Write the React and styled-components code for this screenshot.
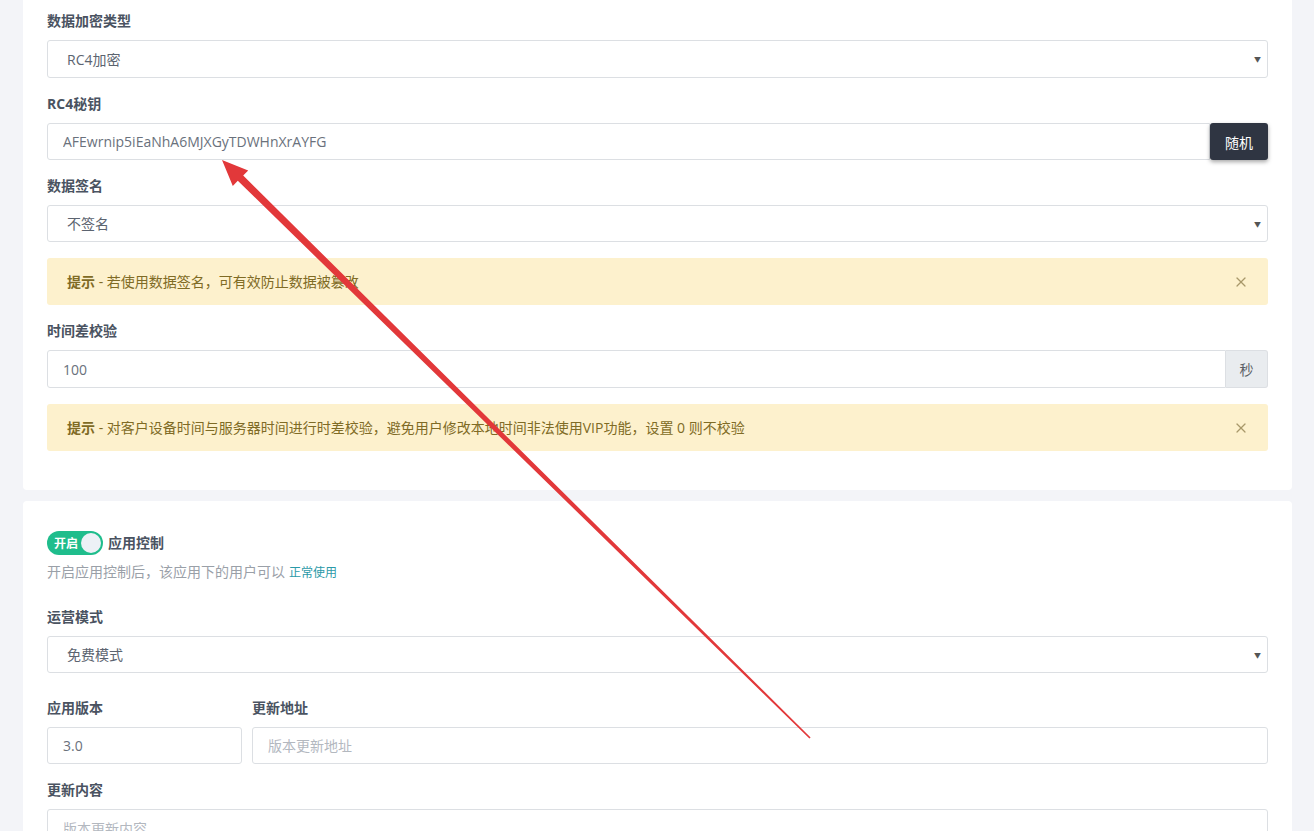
import React from 'react';
import styled, { createGlobalStyle } from 'styled-components';
import { X } from 'lucide-react';

const GlobalStyle = createGlobalStyle`
	html, body {
		margin: 0;
		padding: 0;
		background: #f3f4f8;
		overflow: hidden;
	}
	body {
		font-family: "Open Sans", "Noto Sans CJK SC", sans-serif;
		font-size: 14px;
		color: #4a5260;
	}
	* {
		box-sizing: border-box;
	}
`;

const Page = styled.div`
	position: relative;
	width: 1314px;
	height: 831px;
	padding: 0 22px 0 23px;
	overflow: hidden;
`;

const Card = styled.div`
	background: #fff;
	padding: ${props => props.first ? '11px 24px 39px' : '30px 24px 40px'};
	margin-bottom: 11px;
	border-radius: ${props => props.first ? '0 0 4px 4px' : '4px'};
`;

const Group = styled.div`
	margin-bottom: ${props => props.gap || 16}px;
`;

const Label = styled.label`
	display: block;
	font-weight: 700;
	font-size: 14px;
	line-height: 20px;
	color: #4a5361;
	margin-bottom: 9px;
`;

const SelectWrap = styled.div`
	position: relative;
`;

const Select = styled.select`
	appearance: none;
	-webkit-appearance: none;
	display: block;
	width: 100%;
	height: ${props => props.h || 38}px;
	padding: 0 30px 0 19px;
	border: 1px solid #dcdfe3;
	border-radius: 3px;
	background: #fff;
	font-family: inherit;
	font-size: 14px;
	color: #5c6470;
	outline: none;
`;

const Caret = styled.span`
	position: absolute;
	right: 7px;
	top: 50%;
	transform: translateY(-50%);
	font-size: 7px;
	line-height: 1;
	color: #555;
	pointer-events: none;
`;

const InputGroup = styled.div`
	display: flex;
	align-items: stretch;
	height: ${props => props.h || 37}px;
`;

const Input = styled.input`
	flex: 1;
	min-width: 0;
	display: block;
	width: 100%;
	height: ${props => props.h ? props.h + 'px' : '100%'};
	padding: 0 15px;
	border: 1px solid #dcdfe3;
	border-radius: ${props => props.joined ? '3px 0 0 3px' : '3px'};
	background: #fff;
	font-family: inherit;
	font-size: 14px;
	color: #6a717c;
	outline: none;
	&::placeholder {
		color: #b3b8bf;
	}
`;

const DarkButton = styled.button`
	width: 58px;
	border: none;
	border-radius: 3px;
	background: #2f3542;
	color: #fff;
	font-family: inherit;
	font-size: 14px;
	box-shadow: 0 2px 4px rgba(0, 0, 0, 0.35);
	cursor: pointer;
`;

const Addon = styled.span`
	display: flex;
	align-items: center;
	justify-content: center;
	width: 42px;
	background: #e9ecef;
	border: 1px solid #dcdfe3;
	border-left: none;
	border-radius: 0 3px 3px 0;
	color: #5a5f66;
	font-size: 14px;
`;

const Alert = styled.div`
	display: flex;
	align-items: center;
	justify-content: space-between;
	background: #fdf1cd;
	color: #7f6b25;
	border-radius: 3px;
	padding: 13px 20px;
	line-height: 21px;
	margin-bottom: ${props => props.last ? 0 : 16}px;
	font-size: 14px;

	b {
		font-weight: 700;
	}
	svg {
		margin-right: -1px;
		color: #a8986a;
	}
`;

const SwitchRow = styled.div`
	display: flex;
	align-items: center;
	gap: 5px;
	margin-bottom: 7px;
`;

const Switch = styled.span`
	display: inline-flex;
	align-items: center;
	justify-content: space-between;
	width: 56px;
	height: 24px;
	border-radius: 12px;
	background: ${props => props.on ? '#1fbd8c' : '#ccc'};
	padding: 0 2px 0 7px;
	color: #fff;
	font-size: 12px;
	font-weight: 700;

	&::after {
		content: '';
		width: 20px;
		height: 20px;
		border-radius: 50%;
		background: #edf1f6;
	}
`;

const SwitchTitle = styled.span`
	font-weight: 700;
	color: #4a5361;
	line-height: 24px;
`;

const Help = styled.p`
	margin: 0 0 24px;
	line-height: 20px;
	color: #9aa0a8;
	font-size: 14px;

	a {
		font-size: 12px;
		color: #2b9aa8;
		text-decoration: none;
		margin-left: 4px;
	}
`;

const Row = styled.div`
	display: flex;
	gap: 10px;
`;

const Col = styled.div`
	flex: ${props => props.w ? `0 0 ${props.w}px` : 1};
`;

const TextArea = styled.textarea`
	display: block;
	width: 100%;
	height: 100px;
	padding: 8px 15px;
	border: 1px solid #dcdfe3;
	border-radius: 3px;
	font-family: inherit;
	font-size: 14px;
	resize: none;
	outline: none;
	&::placeholder {
		color: #b3b8bf;
	}
`;

const Overlay = styled.svg`
	position: absolute;
	left: 0;
	top: 0;
	pointer-events: none;
`;

function FieldSelect(props) {
	return (
		<SelectWrap>
			<Select h={props.h} defaultValue={props.value}>
				<option>{props.value}</option>
			</Select>
			<Caret>▼</Caret>
		</SelectWrap>
	);
}

function RedArrow() {
	// tip (222,160) tail (810,738)
	const pts = [
		[222, 160],
		[248.2, 170.4],
		[243.2, 175.6],
		[810.6, 737.4],
		[809.4, 738.6],
		[237.8, 180.8],
		[232.8, 186.0]
	].map(p => p.join(',')).join(' ');
	return (
		<Overlay width="1314" height="831" viewBox="0 0 1314 831">
			<polygon points={pts} fill="#e2383a" />
		</Overlay>
	);
}

export default class App extends React.Component {
	render() {
		return (
			<Page>
				<GlobalStyle />
				<Card first>
					<Group>
						<Label>数据加密类型</Label>
						<FieldSelect value="RC4加密" />
					</Group>
					<Group>
						<Label>RC4秘钥</Label>
						<InputGroup>
							<Input joined defaultValue="AFEwrnip5iEaNhA6MJXGyTDWHnXrAYFG" />
							<DarkButton>随机</DarkButton>
						</InputGroup>
					</Group>
					<Group>
						<Label>数据签名</Label>
						<FieldSelect value="不签名" h={37} />
					</Group>
					<Alert>
						<span><b>提示</b> - 若使用数据签名，可有效防止数据被篡改</span>
						<X size={16} strokeWidth={1.8} />
					</Alert>
					<Group>
						<Label>时间差校验</Label>
						<InputGroup h={38}>
							<Input joined defaultValue="100" />
							<Addon>秒</Addon>
						</InputGroup>
					</Group>
					<Alert last>
						<span><b>提示</b> - 对客户设备时间与服务器时间进行时差校验，避免用户修改本地时间非法使用VIP功能，设置 0 则不校验</span>
						<X size={16} strokeWidth={1.8} />
					</Alert>
				</Card>

				<Card>
					<SwitchRow>
						<Switch on>开启</Switch>
						<SwitchTitle>应用控制</SwitchTitle>
					</SwitchRow>
					<Help>开启应用控制后，该应用下的用户可以<a href="#">正常使用</a></Help>
					<Group gap={25}>
						<Label>运营模式</Label>
						<FieldSelect value="免费模式" h={37} />
					</Group>
					<Group>
						<Row>
							<Col w={195}>
								<Label>应用版本</Label>
								<Input h={37} defaultValue="3.0" />
							</Col>
							<Col>
								<Label>更新地址</Label>
								<Input h={37} placeholder="版本更新地址" />
							</Col>
						</Row>
					</Group>
					<Group>
						<Label>更新内容</Label>
						<TextArea placeholder="版本更新内容" />
					</Group>
				</Card>
				<RedArrow />
			</Page>
		);
	}
}
